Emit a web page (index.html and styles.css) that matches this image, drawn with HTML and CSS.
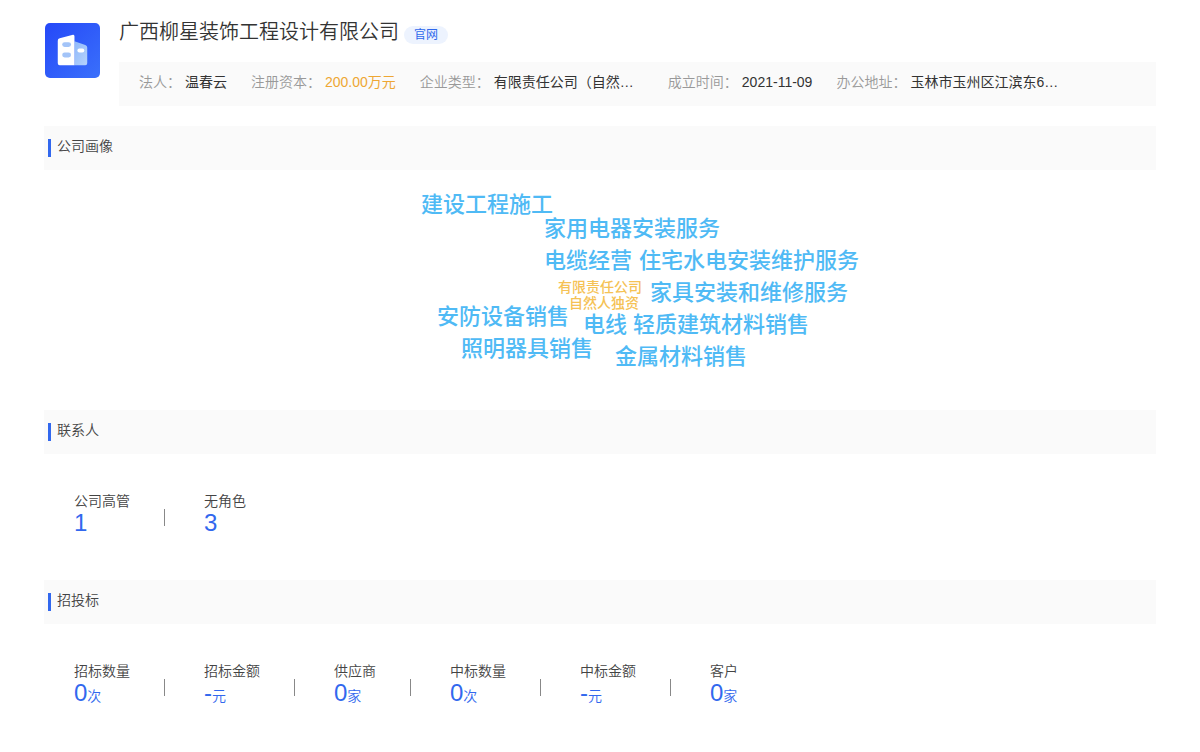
FILE: index.html
```html
<!DOCTYPE html>
<html lang="zh-CN">
<head>
<meta charset="utf-8">
<meta name="viewport" content="width=device-width, initial-scale=1">
<title>广西柳星装饰工程设计有限公司</title>
<link rel="stylesheet" href="styles.css">
</head>
<body>
<main class="page">
  <header class="company">
    <svg class="logo" viewBox="0 0 56 56" aria-hidden="true">
      <defs>
        <linearGradient id="tile" x1="0" y1="0" x2="1" y2="1"><stop offset="0" stop-color="#2548f8"/><stop offset="1" stop-color="#3a70fb"/></linearGradient>
        <linearGradient id="wing" x1="0" y1="0" x2="1" y2="1"><stop offset="0" stop-color="#8fb9fa"/><stop offset="1" stop-color="#b5d2fc"/></linearGradient>
      </defs>
      <rect width="56" height="56" rx="5" fill="url(#tile)"/>
      <path d="M30 18.500L41 22.500Q43 23.200 43 25V41Q43 43 41 43H30Z" fill="url(#wing)"/>
      <path d="M15 15.500L28.500 12Q30 11.700 30 13.500V43H15Q13 43 13 41V18Q13 16 15 15.500Z" fill="#fff"/>
      <rect x="17.500" y="19.500" width="9" height="5" rx="2.500" fill="#a3c4f8"/>
      <rect x="17.500" y="30" width="9" height="5" rx="2.500" fill="#a3c4f8"/>
      <rect x="33" y="26" width="7" height="4" rx="2" fill="#fff"/>
    </svg>
    <div class="company-main">
      <div class="title-row">
        <h1 class="name">广西柳星装饰工程设计有限公司</h1>
        <a class="site" href="#">官网</a>
      </div>
      <dl class="info">
        <div class="field"><dt>法人：</dt><dd>温春云</dd></div>
        <div class="field"><dt>注册资本：</dt><dd class="money">200.00万元</dd></div>
        <div class="field"><dt>企业类型：</dt><dd class="clip">有限责任公司（自然…</dd></div>
        <div class="field"><dt>成立时间：</dt><dd>2021-11-09</dd></div>
        <div class="field"><dt>办公地址：</dt><dd class="clip">玉林市玉州区江滨东6…</dd></div>
      </dl>
    </div>
  </header>

  <section>
    <h2 class="bar">公司画像</h2>
    <div class="portrait">
      <div class="cloud">
        <span class="word w1">建设工程施工</span>
        <span class="word w2">家用电器安装服务</span>
        <span class="word w3">电缆经营</span>
        <span class="word w4">住宅水电安装维护服务</span>
        <span class="word small w5">有限责任公司</span>
        <span class="word small w6">自然人独资</span>
        <span class="word w7">家具安装和维修服务</span>
        <span class="word w8">安防设备销售</span>
        <span class="word w9">电线</span>
        <span class="word w10">轻质建筑材料销售</span>
        <span class="word w11">照明器具销售</span>
        <span class="word w12">金属材料销售</span>
      </div>
    </div>
  </section>

  <section>
    <h2 class="bar">联系人</h2>
    <dl class="stats">
      <div class="stat"><dt>公司高管</dt><dd>1</dd></div>
      <div class="stat"><dt>无角色</dt><dd>3</dd></div>
    </dl>
  </section>

  <section>
    <h2 class="bar">招投标</h2>
    <dl class="stats">
      <div class="stat"><dt>招标数量</dt><dd>0<small>次</small></dd></div>
      <div class="stat"><dt>招标金额</dt><dd>-<small>元</small></dd></div>
      <div class="stat"><dt>供应商</dt><dd>0<small>家</small></dd></div>
      <div class="stat"><dt>中标数量</dt><dd>0<small>次</small></dd></div>
      <div class="stat"><dt>中标金额</dt><dd>-<small>元</small></dd></div>
      <div class="stat"><dt>客户</dt><dd>0<small>家</small></dd></div>
    </dl>
  </section>
</main>
</body>
</html>
```
FILE: styles.css
```css
* { box-sizing: border-box; }
body {
  margin: 0;
  background: #fff;
  color: #444;
  font: 14px/20px "Liberation Sans", "Noto Sans CJK SC", sans-serif;
}
h1, h2, dl, dd { margin: 0; font-weight: 350; }
.page { padding: 16px 44px 0; }

.company { display: flex; gap: 19px; margin-bottom: 20px; }
.logo { flex: none; width: 55px; height: 55px; margin: 7px 0 0 1px; }
.company-main { flex: 1; min-width: 0; }
.title-row { display: flex; align-items: flex-start; gap: 5px; height: 46px; }
.name { color: #333; font-size: 20px; line-height: 32px; }
.site {
  margin-top: 10px;
  padding: 0 10px;
  border-radius: 9px;
  background: #edf3fe;
  color: #2f68ec;
  font-size: 12px;
  line-height: 18px;
  text-decoration: none;
}
.info {
  display: flex;
  gap: 24px;
  padding: 10px 20px 14px;
  background: #fafafa;
}
.field { display: flex; gap: 4px; white-space: nowrap; }
.field dt { color: #999; font-weight: 350; }
.field dd { color: #333; font-weight: 400; }
.field .money { color: #eea734; }
.clip { width: 150px; overflow: hidden; text-overflow: ellipsis; }

.bar {
  display: flex;
  gap: 6px;
  height: 44px;
  padding: 10px 4px 0;
  background: #fafafa;
  font-size: 14px;
  line-height: 20px;
}
.bar::before { content: ""; width: 3px; height: 18px; margin-top: 3px; background: #3268ee; }

.portrait { display: flex; justify-content: center; height: 240px; }
.cloud { position: relative; width: 520px; height: 240px; }
.word {
  position: absolute;
  color: #4fbaf5;
  font-size: 22px;
  font-weight: 500;
  line-height: 32px;
  white-space: nowrap;
}
.small { color: #f5c255; font-size: 14px; line-height: 16px; }
.w1 { left: 81px; top: 19px; }
.w2 { left: 204px; top: 43px; }
.w3 { left: 204px; top: 75px; }
.w4 { left: 299px; top: 75px; }
.w5 { left: 218px; top: 109px; }
.w6 { left: 229px; top: 125px; }
.w7 { left: 310px; top: 107px; }
.w8 { left: 97px; top: 131px; }
.w9 { left: 243px; top: 139px; }
.w10 { left: 293px; top: 139px; }
.w11 { left: 121px; top: 163px; }
.w12 { left: 275px; top: 171px; }

.stats { display: flex; height: 126px; padding: 37px 30px 0; }
.stat { display: flex; flex-direction: column; position: relative; }
.stat + .stat { margin-left: 74px; }
.stat + .stat::before {
  content: "";
  position: absolute;
  left: -40px;
  top: 18px;
  width: 1px;
  height: 17px;
  background: #888;
}
.stat dt { font-weight: 350; }
.stat dd { color: #3268ee; font-size: 24px; line-height: 24px; font-weight: 400; }
.stat small { font-size: 14px; font-weight: 350; }
```
